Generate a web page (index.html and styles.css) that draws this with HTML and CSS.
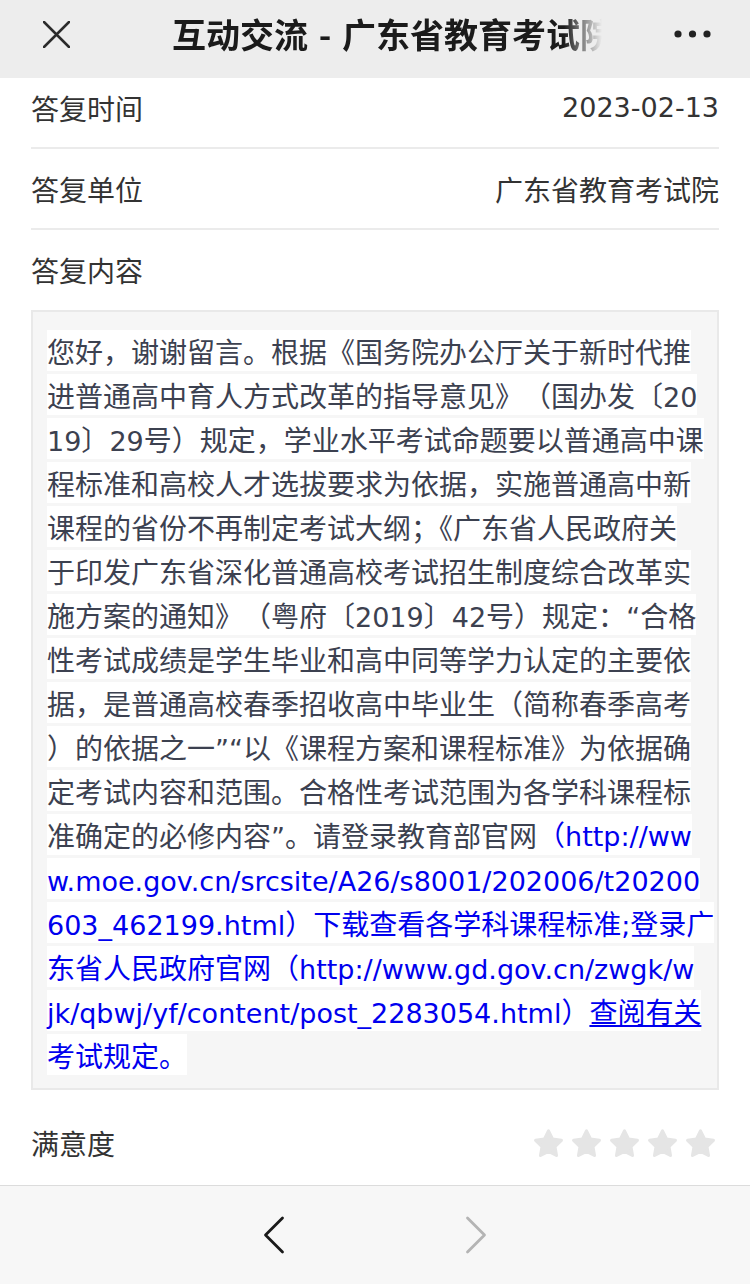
FILE: index.html
```html
<!DOCTYPE html>
<html lang="zh-CN">
<head>
<meta charset="utf-8">
<title>互动交流 - 广东省教育考试院</title>
<link rel="stylesheet" href="styles.css">
</head>
<body>
<div class="page">
  <header class="topbar">
    <svg class="close" viewBox="0 0 27 27" width="27" height="27"><path d="M1 1L26 26M26 1L1 26" stroke="#2b2b2b" stroke-width="2.5" stroke-linecap="round" fill="none"/></svg>
    <div class="title">互动交流<span class="sep"> - </span>广东省教育考试院</div>
    <svg class="more" viewBox="0 0 38 8" width="38" height="8"><circle cx="4" cy="4" r="3.6" fill="#222"/><circle cx="18.5" cy="4" r="3.6" fill="#222"/><circle cx="33" cy="4" r="3.6" fill="#222"/></svg>
  </header>

  <main class="main">
    <div class="row first">
      <span class="label">答复时间</span>
      <span class="value num">2023-02-13</span>
    </div>
    <div class="row">
      <span class="label">答复单位</span>
      <span class="value">广东省教育考试院</span>
    </div>
    <div class="row plain">
      <span class="label">答复内容</span>
    </div>

    <div class="reply">
      <span class="ln">您好，谢谢留言。根据《国务院办公厅关于新时代推</span><br>
      <span class="ln full">进普通高中育人方式改革的指导意见》（国办发〔<span class="n">20</span></span><br>
      <span class="ln"><span class="n">19</span>〕<span class="n">29</span>号）规定，学业水平考试命题要以普通高中课</span><br>
      <span class="ln">程标准和高校人才选拔要求为依据，实施普通高中新</span><br>
      <span class="ln">课程的省份不再制定考试大纲；《广东省人民政府关</span><br>
      <span class="ln">于印发广东省深化普通高校考试招生制度综合改革实</span><br>
      <span class="ln full">施方案的通知》（粤府〔<span class="n">2019</span>〕<span class="n">42</span>号）规定：<span class="n">“</span>合格</span><br>
      <span class="ln">性考试成绩是学生毕业和高中同等学力认定的主要依</span><br>
      <span class="ln">据，是普通高校春季招收高中毕业生（简称春季高考</span><br>
      <span class="ln">）的依据之一<span class="n">”“</span>以《课程方案和课程标准》为依据确</span><br>
      <span class="ln">定考试内容和范围。合格性考试范围为各学科课程标</span><br>
      <span class="ln">准确定的必修内容<span class="n">”</span>。请登录教育部官网<span class="link">（<span class="n">http://ww</span></span></span><br>
      <span class="ln link"><span class="n">w.moe.gov.cn/srcsite/A26/s8001/202006/t20200</span></span><br>
      <span class="ln link"><span class="n">603_462199.html</span>）下载查看各学科课程标准<span class="n">;</span>登录广</span><br>
      <span class="ln link">东省人民政府官网（<span class="n">http://www.gd.gov.cn/zwgk/w</span></span><br>
      <span class="ln link"><span class="n">jk/qbwj/yf/content/post_2283054.html</span>）<span class="ul">查阅有关</span></span><br>
      <span class="ln link">考试规定。</span>
    </div>

    <div class="row rating">
      <span class="label">满意度</span>
      <div class="stars">
        <svg class="star" viewBox="0 0 24 24" width="31" height="31"><path d="M12 2.3L15.09 8.55 21.99 9.56 16.99 14.42 18.17 21.29 12 18.05 5.83 21.29 7.01 14.42 2.01 9.56 8.91 8.55Z"/></svg>
        <svg class="star" viewBox="0 0 24 24" width="31" height="31"><path d="M12 2.3L15.09 8.55 21.99 9.56 16.99 14.42 18.17 21.29 12 18.05 5.83 21.29 7.01 14.42 2.01 9.56 8.91 8.55Z"/></svg>
        <svg class="star" viewBox="0 0 24 24" width="31" height="31"><path d="M12 2.3L15.09 8.55 21.99 9.56 16.99 14.42 18.17 21.29 12 18.05 5.83 21.29 7.01 14.42 2.01 9.56 8.91 8.55Z"/></svg>
        <svg class="star" viewBox="0 0 24 24" width="31" height="31"><path d="M12 2.3L15.09 8.55 21.99 9.56 16.99 14.42 18.17 21.29 12 18.05 5.83 21.29 7.01 14.42 2.01 9.56 8.91 8.55Z"/></svg>
        <svg class="star" viewBox="0 0 24 24" width="31" height="31"><path d="M12 2.3L15.09 8.55 21.99 9.56 16.99 14.42 18.17 21.29 12 18.05 5.83 21.29 7.01 14.42 2.01 9.56 8.91 8.55Z"/></svg>
      </div>
    </div>
  </main>

  <footer class="toolbar">
    <div class="navbtn">
      <svg viewBox="0 0 22 38" width="22" height="38"><path d="M19.5 2L2.5 19l17 17" stroke="#1a1a1a" stroke-width="2.8" stroke-linecap="round" stroke-linejoin="round" fill="none"/></svg>
    </div>
    <div class="navbtn">
      <svg viewBox="0 0 22 38" width="22" height="38"><path d="M2.5 2l17 17-17 17" stroke="#b4b4b4" stroke-width="2.8" stroke-linecap="round" stroke-linejoin="round" fill="none"/></svg>
    </div>
  </footer>
</div>
</body>
</html>
```

FILE: styles.css
```css
* {
  box-sizing: border-box;
}

html, body {
  margin: 0;
  padding: 0;
  background: #ffffff;
}

body {
  font-family: "Noto Sans CJK SC", "Noto Sans", sans-serif;
  color: #333333;
}

.page {
  display: flex;
  flex-direction: column;
  height: 1284px;
  overflow: hidden;
}

/* ---------- top bar ---------- */
.topbar {
  flex-shrink: 0;
  height: 78px;
  padding-bottom: 10px;
  background: #ededed;
  display: flex;
  align-items: center;
}

.close {
  flex-shrink: 0;
  margin-left: 43px;
  display: block;
}

.title {
  margin-left: 102px;
  width: 430px;
  font-size: 34px;
  font-weight: 700;
  color: #1b1b1b;
  white-space: nowrap;
  overflow: hidden;
  line-height: 44px;
  -webkit-mask-image: linear-gradient(to right, #000 0, #000 392px, rgba(0,0,0,0) 430px);
  mask-image: linear-gradient(to right, #000 0, #000 392px, rgba(0,0,0,0) 430px);
}

.sep {
  word-spacing: 3px;
}

.more {
  flex-shrink: 0;
  margin-left: auto;
  margin-right: 38px;
  display: block;
}

/* ---------- main ---------- */
.main {
  flex: 1;
  min-height: 0;
  overflow: hidden;
  padding: 0 31px;
}

.row {
  height: 81px;
  display: flex;
  align-items: center;
  justify-content: space-between;
  border-bottom: 2px solid #ebebeb;
}

.row.first {
  height: 71px;
  padding-bottom: 9px;
}

.row.plain {
  height: 80px;
  border-bottom: none;
}

.label,
.value {
  font-size: 28px;
  color: #333333;
  line-height: 40px;
}

.value.num {
  font-family: "DejaVu Sans", "Noto Sans CJK SC", sans-serif;
  font-size: 27px;
}

/* ---------- reply box ---------- */
.reply {
  background: #f6f6f6;
  border: 2px solid #e9e9e9;
  padding: 16px 10px 12px 14px;
  font-size: 28px;
  line-height: 44px;
  color: #3c4150;
  white-space: nowrap;
}

.ln {
  background: #ffffff;
  padding: 0.5px 0;
}

.ln.full {
  text-spacing-trim: space-all;
}

.n {
  font-family: "DejaVu Sans", "Noto Sans CJK SC", sans-serif;
  font-size: 27px;
  line-height: 1;
}

.link {
  color: #0000ee;
}

.ul {
  text-decoration: underline;
  text-underline-offset: 3px;
}

/* ---------- rating ---------- */
.row.rating {
  margin-top: 14px;
  height: 78px;
  border-bottom: none;
}

.stars {
  display: flex;
  gap: 7px;
  margin-right: 3px;
}

.star {
  display: block;
}

.star path {
  fill: #e5e5e5;
  stroke: #e5e5e5;
  stroke-width: 2.4;
  stroke-linejoin: round;
}

/* ---------- bottom toolbar ---------- */
.toolbar {
  flex-shrink: 0;
  height: 99px;
  background: #f7f7f7;
  border-top: 1px solid #dcdcdc;
  display: flex;
  justify-content: center;
  align-items: center;
}

.navbtn {
  width: 202px;
  display: flex;
  justify-content: center;
  align-items: center;
}

.navbtn svg {
  display: block;
}
```
